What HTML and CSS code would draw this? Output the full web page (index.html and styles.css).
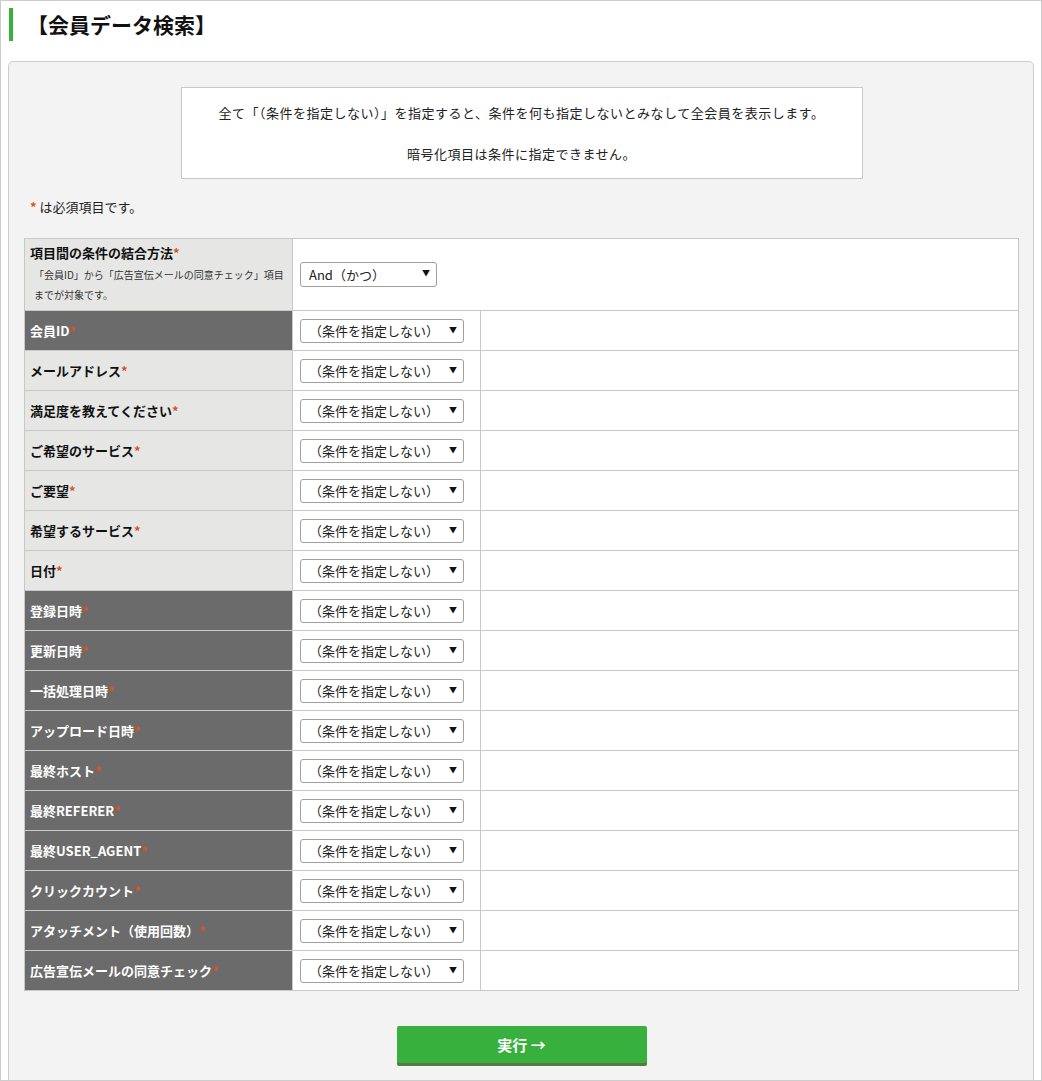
FILE: index.html
```html
<!DOCTYPE html>
<html lang="ja">
<head>
    <meta charset="UTF-8">
    <meta name="viewport" content="width=device-width, initial-scale=1.0">
    <title>会員データ検索</title>
    <link rel="stylesheet" href="styles.css">
</head>
<body>
<div class="page">
    <h1 class="page-title">【会員データ検索】</h1>

    <div class="panel">
        <div class="notice">
            <p>全て「（条件を指定しない）」を指定すると、条件を何も指定しないとみなして全会員を表示します。</p>
            <p>暗号化項目は条件に指定できません。</p>
        </div>

        <p class="required-note"><span class="req">*</span> は必須項目です。</p>

        <form id="searchForm">
            <table class="search-table">
                <colgroup>
                    <col class="col-label">
                    <col class="col-select">
                    <col>
                </colgroup>
                <tr class="row-top">
                    <th class="light">
                        項目間の条件の結合方法<span class="req">*</span>
                        <span class="sub">「会員ID」から「広告宣伝メールの同意チェック」項目までが対象です。</span>
                    </th>
                    <td colspan="2">
                        <span class="select-wrap short">
                            <select name="join">
                                <option>And（かつ）</option>
                                <option>Or（または）</option>
                            </select>
                        </span>
                    </td>
                </tr>
                <tr><th class="dark">会員ID<span class="req">*</span></th><td><span class="select-wrap"><select><option>（条件を指定しない）</option></select></span></td><td></td></tr>
                <tr><th class="light">メールアドレス<span class="req">*</span></th><td><span class="select-wrap"><select><option>（条件を指定しない）</option></select></span></td><td></td></tr>
                <tr><th class="light">満足度を教えてください<span class="req">*</span></th><td><span class="select-wrap"><select><option>（条件を指定しない）</option></select></span></td><td></td></tr>
                <tr><th class="light">ご希望のサービス<span class="req">*</span></th><td><span class="select-wrap"><select><option>（条件を指定しない）</option></select></span></td><td></td></tr>
                <tr><th class="light">ご要望<span class="req">*</span></th><td><span class="select-wrap"><select><option>（条件を指定しない）</option></select></span></td><td></td></tr>
                <tr><th class="light">希望するサービス<span class="req">*</span></th><td><span class="select-wrap"><select><option>（条件を指定しない）</option></select></span></td><td></td></tr>
                <tr><th class="light">日付<span class="req">*</span></th><td><span class="select-wrap"><select><option>（条件を指定しない）</option></select></span></td><td></td></tr>
                <tr><th class="dark">登録日時<span class="req">*</span></th><td><span class="select-wrap"><select><option>（条件を指定しない）</option></select></span></td><td></td></tr>
                <tr><th class="dark">更新日時<span class="req">*</span></th><td><span class="select-wrap"><select><option>（条件を指定しない）</option></select></span></td><td></td></tr>
                <tr><th class="dark">一括処理日時<span class="req">*</span></th><td><span class="select-wrap"><select><option>（条件を指定しない）</option></select></span></td><td></td></tr>
                <tr><th class="dark">アップロード日時<span class="req">*</span></th><td><span class="select-wrap"><select><option>（条件を指定しない）</option></select></span></td><td></td></tr>
                <tr><th class="dark">最終ホスト<span class="req">*</span></th><td><span class="select-wrap"><select><option>（条件を指定しない）</option></select></span></td><td></td></tr>
                <tr><th class="dark">最終REFERER<span class="req">*</span></th><td><span class="select-wrap"><select><option>（条件を指定しない）</option></select></span></td><td></td></tr>
                <tr><th class="dark">最終USER_AGENT<span class="req">*</span></th><td><span class="select-wrap"><select><option>（条件を指定しない）</option></select></span></td><td></td></tr>
                <tr><th class="dark">クリックカウント<span class="req">*</span></th><td><span class="select-wrap"><select><option>（条件を指定しない）</option></select></span></td><td></td></tr>
                <tr><th class="dark">アタッチメント（使用回数）<span class="req">*</span></th><td><span class="select-wrap"><select><option>（条件を指定しない）</option></select></span></td><td></td></tr>
                <tr><th class="dark">広告宣伝メールの同意チェック<span class="req">*</span></th><td><span class="select-wrap"><select><option>（条件を指定しない）</option></select></span></td><td></td></tr>
            </table>

            <div class="actions">
                <button type="button" class="submit-btn">実行 →</button>
            </div>
        </form>
    </div>
</div>
</body>
</html>
```

FILE: styles.css
```css
html, body {
    margin: 0;
    padding: 0;
}
body {
    font-family: "Noto Sans CJK JP", "Noto Sans", sans-serif;
    font-size: 13px;
    color: #222;
    background: #fff;
}
.page {
    box-sizing: border-box;
    height: 1081px;
    border: 1px solid #ccc;
    overflow: hidden;
}
.page-title {
    margin: 7px 0 0 8px;
    padding: 0 0 0 14px;
    border-left: 4px solid #37b03e;
    font-size: 21px;
    line-height: 33px;
    font-weight: bold;
    color: #111;
}
.panel {
    margin: 20px 7px 0;
    padding: 25px 14px 40px 15px;
    background: #f3f3f3;
    border: 1px solid #ccc;
    border-radius: 5px;
}
.notice {
    width: 680px;
    margin: 0 auto;
    padding: 15px 0 15px;
    background: #fff;
    border: 1px solid #c8c8c8;
    text-align: center;
    line-height: 19px;
    letter-spacing: 0.5px;
}
.notice p {
    margin: 0;
}
.notice p + p {
    margin-top: 22px;
}
.required-note {
    margin: 18px 0 0 6px;
    line-height: 20px;
}
.req {
    color: #e0501e;
    font-weight: bold;
}
.search-table {
    width: 100%;
    margin-top: 21px;
    border-collapse: collapse;
    table-layout: fixed;
    background: #fff;
}
.col-label {
    width: 268px;
}
.col-select {
    width: 188px;
}
.search-table th,
.search-table td {
    border: 1px solid #c8c8c8;
    height: 39px;
    padding: 0 5px;
    vertical-align: middle;
    text-align: left;
}
.search-table td {
    padding: 0 7px;
}
.search-table th {
    font-size: 13px;
    font-weight: bold;
    line-height: 18px;
}
.search-table th.light {
    background: #e6e7e5;
    color: #111;
}
.search-table th.dark {
    background: #6b6b6b;
    color: #fff;
}
.row-top th,
.row-top td {
    height: 66px;
}
.row-top th {
    vertical-align: top;
    padding-top: 5px;
    padding-bottom: 0;
}
.sub {
    display: block;
    margin-top: 3px;
    padding-left: 4px;
    font-size: 10px;
    font-weight: normal;
    line-height: 20px;
    color: #333;
}
.select-wrap {
    position: relative;
    display: inline-block;
    width: 164px;
}
.select-wrap.short {
    width: 137px;
}
.select-wrap select {
    width: 100%;
    height: 24px;
    padding: 0 20px 0 8px;
    -webkit-appearance: none;
    appearance: none;
    background: #fff;
    border: 1px solid #a0a0a0;
    border-radius: 3px;
    font-family: "Noto Sans CJK JP", "Noto Sans", sans-serif;
    font-size: 13px;
    color: #222;
}
.select-wrap.short select {
    height: 25px;
}
.select-wrap::after {
    content: "▼";
    position: absolute;
    right: 7px;
    top: 6px;
    font-size: 8px;
    line-height: 10px;
    color: #111;
    pointer-events: none;
}
.actions {
    margin-top: 35px;
    text-align: center;
}
.submit-btn {
    width: 250px;
    height: 37px;
    background: #37b03e;
    color: #fff;
    border: none;
    border-radius: 2px;
    box-shadow: 0 3px 0 #567a45;
    font-family: "Noto Sans CJK JP", "Noto Sans", sans-serif;
    font-size: 15px;
    font-weight: bold;
    cursor: pointer;
}
.submit-btn:hover {
    background: #32a039;
}
```
